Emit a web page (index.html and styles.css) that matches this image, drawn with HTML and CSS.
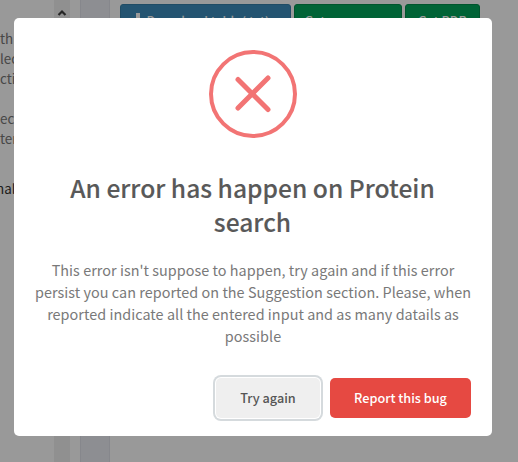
FILE: index.html
```html
<!DOCTYPE html>
<html lang="en">
<head>
<meta charset="utf-8">
<title>Protein search</title>
<link rel="stylesheet" href="styles.css">
</head>
<body>
<div class="page">
  <aside class="notes">
    <p>th</p><p>lec</p><p>ctiv</p>
    <p class="gap">ect</p><p>ter</p>
    <p class="strong">nal</p>
  </aside>
  <div class="scrollbar"><svg width="10" height="8" viewBox="0 0 10 8"><path d="M1.5 7 5 3.5 8.5 7" fill="none" stroke="#404040" stroke-width="2.2"/></svg></div>
  <div class="divider"></div>
  <main class="toolbar">
    <button class="tool blue"><svg width="12" height="13" viewBox="0 0 12 13"><path d="M4 0h4v6H11L6 11 1 6h3z" fill="currentColor"/></svg>Download table(.txt)</button>
    <button class="tool green sequences">Get sequences</button>
    <button class="tool green pdb">Get PDB</button>
  </main>
</div>
<div class="overlay">
  <div class="modal" role="dialog">
    <svg class="error-icon" width="88" height="88" viewBox="0 0 88 88"><circle cx="44" cy="44" r="42" fill="none" stroke="#f27474" stroke-width="4"/><path d="M29 29.5 59 59.5M59 28 29 58" stroke="#f27474" stroke-width="5" stroke-linecap="round"/></svg>
    <h1 class="title">An error has happen on Protein<br>search</h1>
    <p class="message">This error isn't suppose to happen, try again and if this error<br>persist you can reported on the Suggestion section. Please, when<br>reported indicate all the entered input and as many datails as<br>possible</p>
    <div class="actions">
      <button class="action retry">Try again</button>
      <button class="action report">Report this bug</button>
    </div>
  </div>
</div>
</body>
</html>
```
FILE: styles.css
```css
* { box-sizing: border-box; }
body { margin: 0; overflow: hidden; background: #fff; font-family: "Noto Sans CJK SC", "Open Sans", sans-serif; }
button { font-family: inherit; border: 0; margin: 0; padding: 0; white-space: nowrap; }
p, h1 { margin: 0; }
.page { display: flex; height: 462px; }
.notes { width: 54px; padding-top: 28px; overflow: hidden; color: #777; font-size: 13.4px; line-height: 20px; }
.notes .gap { margin-top: 20px; }
.notes .strong { margin: 30px 0 0 -4px; color: #333; }
.scrollbar { width: 16px; background: #f0f0f0; padding: 8px 3px; line-height: 0; }
.divider { width: 30px; margin-left: 10px; background: #ebedf3; border: solid #dfe2ea; border-width: 0 1px; }
.toolbar { display: flex; align-items: flex-start; gap: 3px; padding: 4px 0 0 10px; }
.tool { height: 34px; border-radius: 3px; color: #fff; font-size: 12.6px; font-weight: 500; line-height: 32px; }
.blue { width: 171px; padding-right: 10px; background: #3c8dbc; border: 1px solid #367fa9; }
.blue svg { margin-right: 3px; vertical-align: 0; }
.green { background: #00a65a; border: 1px solid #008d4c; }
.sequences { width: 108px; }
.pdb { width: 75px; }
.overlay { position: fixed; inset: 0; padding: 18px 0 0 14px; background: rgba(0, 0, 0, .4); }
.modal { width: 478px; height: 418px; padding-top: 32px; border-radius: 5px; background: #fff; text-align: center; }
.error-icon { display: block; margin: 0 auto; }
.title { margin-top: 32px; padding-right: 1px; color: #595959; font-size: 24.6px; line-height: 34px; font-weight: 500; white-space: nowrap; -webkit-text-stroke: .1px #595959; }
.message { margin-top: 21px; color: #797979; font-size: 14.4px; line-height: 22px; letter-spacing: .04px; white-space: nowrap; }
.actions { display: flex; justify-content: flex-end; gap: 10px; padding: 31px 21px 0 0; }
.action { height: 40px; border-radius: 5px; font-size: 12.7px; font-weight: 500; line-height: 40px; }
.retry { width: 104px; background: #efefef; color: #555; box-shadow: 0 0 0 1px #fff, 0 0 0 3px #d5dadd; }
.report { width: 141px; background: #e64942; color: #fff; }
```
